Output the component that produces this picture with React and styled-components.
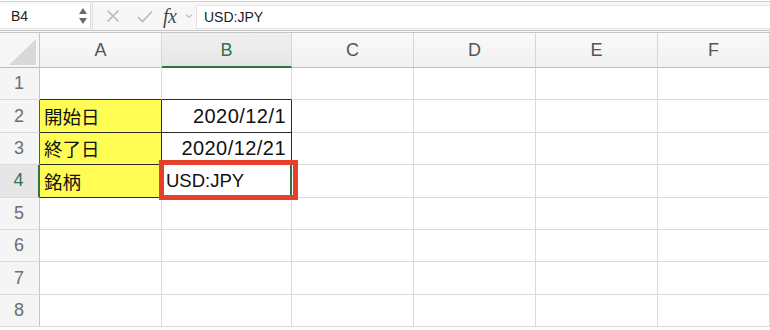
import React from "react";
import styled, { createGlobalStyle } from "styled-components";

const Global = createGlobalStyle`
  html, body { margin: 0; padding: 0; background: #fff; }
  body { font-family: "Liberation Sans", "Noto Sans CJK JP", sans-serif; overflow: hidden; }
  * { box-sizing: border-box; }
`;

const Page = styled.div`
  width: 770px;
  height: 330px;
  overflow: hidden;
  background: #fff;
`;

const TopBar = styled.div`
  margin-top: 1px;
  height: 32px;
  display: flex;
  align-items: flex-start;
  background: #f7f7f7;
  border-top: 1px solid #d2d2d2;
  border-bottom: 3px double #c6c6c6;
`;

const NameBox = styled.div`
  position: relative;
  width: 91px;
  height: 25px;
  margin-top: 2px;
  background: #fff;
  border-right: 1px solid #dcdcdc;
  border-bottom: 1px solid #e2e2e2;
  display: flex;
  align-items: center;
  padding-left: 11px;
  font-size: 14px;
  color: #222;
`;

const Spinner = styled.div`
  position: absolute;
  right: 3px;
  top: 4px;
  display: flex;
  flex-direction: column;
  gap: 4px;
`;

const Arrow = styled.span`
  width: 0;
  height: 0;
  border-left: 4px solid transparent;
  border-right: 4px solid transparent;
  ${(p) => (p.$down ? "border-top: 6px solid #6a6a6a;" : "border-bottom: 6px solid #6a6a6a;")}
`;

const Divider = styled.div`
  width: 1px;
  align-self: stretch;
  background: #dedede;
  margin-left: 1px;
`;

const Actions = styled.div`
  display: flex;
  align-items: center;
  height: 28px;
  padding-left: 13px;
`;

const IconSlot = styled.div`
  width: ${(p) => p.$w}px;
  display: flex;
  align-items: center;
  justify-content: flex-start;
`;

const Fx = styled.span`
  font-family: "Liberation Serif", serif;
  font-style: italic;
  font-size: 20px;
  color: #4a4a4a;
  letter-spacing: -0.5px;
`;

const FormulaBox = styled.div`
  flex: 1;
  height: 24px;
  margin-top: 3px;
  background: #fff;
  border-left: 1px solid #e0e0e0;
  border-top: 1px solid #e6e6e6;
  border-bottom: 1px solid #e2e2e2;
  display: flex;
  align-items: center;
  padding-left: 7px;
  font-size: 14px;
  color: #222;
`;

const Sheet = styled.div`
  display: grid;
  grid-template-columns: 40px 122px 130px 122px 122px 122px 1fr;
  grid-template-rows: 35px repeat(8, 32.4px);
`;

const Corner = styled.div`
  position: relative;
  background: #f6f6f6;
  border-right: 1px solid #c8c8c8;
  border-bottom: 1px solid #bdbdbd;
  &::after {
    content: "";
    position: absolute;
    left: 9px;
    top: 6px;
    width: 27px;
    height: 26px;
    background: #d9d9d9;
    clip-path: polygon(100% 0, 100% 100%, 0 100%);
  }
`;

const ColHead = styled.div`
  display: flex;
  align-items: center;
  justify-content: center;
  background: ${(p) => (p.$active ? "linear-gradient(#f0f0f0, #e6e6e6)" : "linear-gradient(#fafafa, #f1f1f1)")};
  border-right: 1px solid #d6d6d6;
  border-bottom: ${(p) => (p.$active ? "2px solid #2f7446" : "1px solid #bdbdbd")};
  color: ${(p) => (p.$active ? "#2f7446" : "#555")};
  font-size: 18px;
  padding-top: ${(p) => (p.$active ? "1px" : "0")};
`;

const RowHead = styled.div`
  display: flex;
  align-items: center;
  justify-content: center;
  background: ${(p) => (p.$active ? "#e6e6e6" : "#f5f5f5")};
  border-right: ${(p) =>
    p.$active ? "2px solid #2f7446" : p.$boxed ? "1px solid #555" : "1px solid #c8c8c8"};
  border-bottom: 1px solid #dadada;
  color: ${(p) => (p.$active ? "#2f7446" : "#6e6e6e")};
  font-size: 18px;
  padding-right: 1px;
`;

const Cell = styled.div`
  position: relative;
  display: flex;
  align-items: center;
  justify-content: ${(p) => (p.$right ? "flex-end" : "flex-start")};
  padding: ${(p) => (p.$right ? "0 5px 0 0" : "0 0 0 4px")};
  background: ${(p) => (p.$fill ? "#fffd54" : "#fff")};
  border-right: 1px solid ${(p) => (p.$box ? "#2b2b2b" : "#dadada")};
  border-bottom: 1px solid ${(p) => (p.$box || p.$boxBelow ? "#2b2b2b" : "#dadada")};
  font-size: 20px;
  color: #111;
  letter-spacing: ${(p) => (p.$right ? "0.45px" : "0")};
`;

const Jp = styled.span`
  font-family: "Noto Sans CJK JP", sans-serif;
  font-size: 18.5px;
  letter-spacing: 0;
  color: #111;
`;

const Ticker = styled.span`
  font-size: 18.5px;
  letter-spacing: 0;
`;

const SelectEdge = styled.div`
  position: absolute;
  right: -1px;
  top: 0;
  bottom: 0;
  width: 2px;
  background: #2f7446;
`;

const Callout = styled.div`
  position: absolute;
  z-index: 10;
  left: -3px;
  right: -7px;
  top: -5px;
  bottom: -3px;
  border: 5px solid #e4402a;
  pointer-events: none;
`;

const cols = ["A", "B", "C", "D", "E", "F"];

const data = {
  2: { A: { jp: "開始日" }, B: { text: "2020/12/1", right: true } },
  3: { A: { jp: "終了日" }, B: { text: "2020/12/21", right: true } },
  4: { A: { jp: "銘柄" }, B: { ticker: "USD:JPY" } },
};

export default function App() {
  const rows = [1, 2, 3, 4, 5, 6, 7, 8];
  return (
    <Page>
      <Global />
      <TopBar>
        <NameBox>
          B4
          <Spinner>
            <Arrow />
            <Arrow $down />
          </Spinner>
        </NameBox>
        <Divider />
        <Actions>
          <IconSlot $w={31}>
            <svg width="14" height="14" viewBox="0 0 14 14">
              <path d="M1.5 1.5 L12.5 12.5 M12.5 1.5 L1.5 12.5" stroke="#b8b8b8" strokeWidth="1.6" fill="none" />
            </svg>
          </IconSlot>
          <IconSlot $w={26}>
            <svg width="16" height="13" viewBox="0 0 16 13">
              <path d="M1 7 L5.5 11.5 L15 1.5" stroke="#b8b8b8" strokeWidth="1.6" fill="none" />
            </svg>
          </IconSlot>
          <IconSlot $w={22}>
            <Fx>fx</Fx>
          </IconSlot>
          <IconSlot $w={11}>
            <svg width="8" height="6" viewBox="0 0 8 6">
              <path d="M1 1.5 L4 4.5 L7 1.5" stroke="#a0a0a0" strokeWidth="1" fill="none" />
            </svg>
          </IconSlot>
        </Actions>
        <FormulaBox>USD:JPY</FormulaBox>
      </TopBar>
      <Sheet>
        <Corner />
        {cols.map((c) => (
          <ColHead key={c} $active={c === "B"}>
            {c}
          </ColHead>
        ))}
        {rows.map((r) => (
          <React.Fragment key={r}>
            <RowHead $active={r === 4} $boxed={r === 2 || r === 3}>
              {r}
            </RowHead>
            {cols.map((c) => {
              const d = data[r] && data[r][c];
              const inBox = r >= 2 && r <= 4 && (c === "A" || c === "B");
              const aboveBox = r === 1 && (c === "A" || c === "B");
              return (
                <Cell
                  key={c}
                  $box={inBox}
                  $boxBelow={aboveBox}
                  $fill={inBox && c === "A"}
                  $right={d && d.right}
                >
                  {d && d.jp && <Jp>{d.jp}</Jp>}
                  {d && d.text}
                  {d && d.ticker && <Ticker>{d.ticker}</Ticker>}
                  {r === 4 && c === "B" && (
                    <>
                      <SelectEdge />
                      <Callout />
                    </>
                  )}
                </Cell>
              );
            })}
          </React.Fragment>
        ))}
      </Sheet>
    </Page>
  );
}
